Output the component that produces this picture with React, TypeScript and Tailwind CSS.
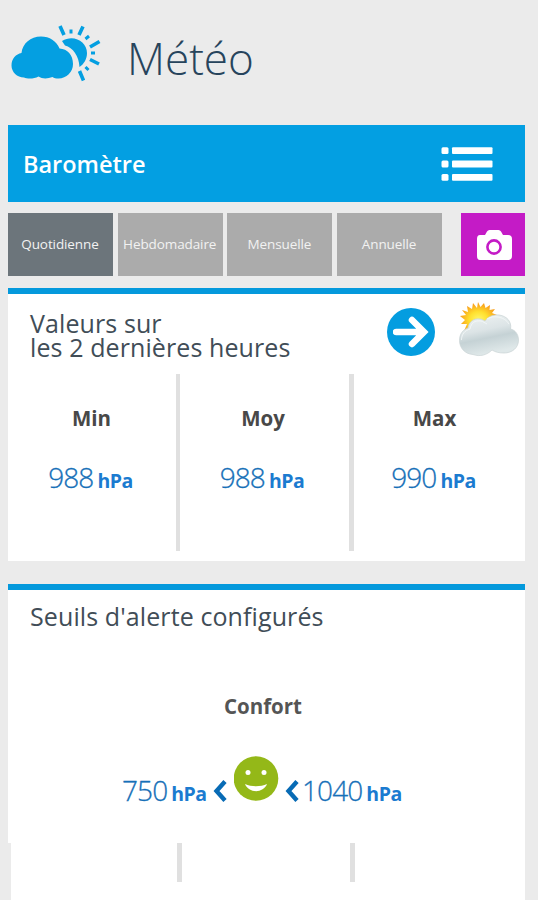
const periods = ['Quotidienne', 'Hebdomadaire', 'Mensuelle', 'Annuelle'];

const stats = [
    { label: 'Min', value: '988', column: 'w-[172px] border-r-4 pr-px' },
    { label: 'Moy', value: '988', column: 'w-[174px] border-r-5 pr-[3px]' },
    { label: 'Max', value: '990', column: 'w-[163px] pr-[2px]' },
];

function WeatherLogo() {
    return (
        <svg className="w-[92px] h-[60px] shrink-0" viewBox="0 0 92 60" fill="none">
            <path
                fill="#049fe1"
                d="M13 52.500C6 52.500 .5 47 .5 40.500C.5 33.500 5 29 10.500 28C11.500 18.500 19.500 11.500 30 11.500C38.500 11.500 45.500 16 48.500 23.500C56.500 24 62 30 62 39C62 47 55.500 53.500 47.500 53.500C45 53.500 43 53 41.500 52C36.500 54 31 54 27.500 51.500C23 54 16.500 54 13 52.500Z"
            />
            <path fill="#049fe1" d="M51 16C63 9 76 17 76 28C76 34 73 39 68.500 42C68 31 62 22.500 54 20.500Z" />
            <g stroke="#049fe1" strokeWidth="3.6">
                <path d="M49 1L53 10M72 1.500L68 10M88.500 16.500L79 22M88 39L79 34.500M68.500 46L72.500 55.500" />
                <path d="M60 4.500V8.500M78 11L74.500 14M84 28H80M77.500 45L74.500 42" strokeWidth="3" />
            </g>
        </svg>
    );
}

function PartlyCloudy() {
    return (
        <svg className="w-[62px] h-[56px] shrink-0" viewBox="0 0 62 56">
            <defs>
                <radialGradient id="sun" cx="50%" cy="55%" r="50%">
                    <stop offset="0" stopColor="#fff76a" />
                    <stop offset="0.500" stopColor="#ffe02e" />
                    <stop offset="1" stopColor="#f9a01c" />
                </radialGradient>
                <linearGradient id="cloud" x1="0" y1="0" x2="0.300" y2="1">
                    <stop offset="0" stopColor="#f0f4f4" />
                    <stop offset="0.450" stopColor="#dce4e6" />
                    <stop offset="0.650" stopColor="#c5d2d5" />
                    <stop offset="1" stopColor="#dfe8e9" />
                </linearGradient>
            </defs>
            <path
                fill="url(#sun)"
                d="M20 0L22.500 5L26 1L27.500 6L32 3L31.500 8L37 7L34 11L39 13L35 16L39 20L34 20L36 26L31 24L30 30L26 26L22 32L19 27L14 31L13 26L6 29L9 22L3 22L7 18L2 14L8 13L4 8L10 10L9 4L14 7L15 1L19 6Z"
            />
            <path
                fill="url(#cloud)"
                stroke="#c9d2d4"
                strokeWidth="0.700"
                d="M15 52.500C7 52 1.500 46 1.500 38.500C1.500 32 5 27.500 10 26C11 19.500 16 16 22 17C24 17 25 18 27 19C30 14 36 12.500 41 13C49 14 54 20 52.500 27C57 28 60.500 32 60.500 38C60.500 46 54 51 46 51C41 51 37 50 34 48C29 53 22 55 15 52.500Z"
            />
            <path
                fill="none"
                stroke="#f5f9f9"
                strokeWidth="1"
                opacity="0.800"
                d="M3.500 38C3.500 32 7 28.500 12 27C13 21 17 18 23 19C25 19.500 27 21 29 22M29 17C36 12.500 47 15 51 22"
            />
        </svg>
    );
}

function Chevron() {
    return (
        <svg className="w-[14px] h-[22px]" viewBox="0 0 14 22" fill="none">
            <path d="M12 1.500L3.500 11L12 20.500" stroke="#086bb5" strokeWidth="4.400" />
        </svg>
    );
}

function Measure({ value }: { value: string }) {
    return (
        <div className="flex items-baseline gap-[4px] leading-[28px] whitespace-nowrap">
            <span className="text-[28px] font-light tracking-[-0.900px] text-[#1670b8] [-webkit-text-stroke:0.300px_#1670b8]">{value}</span>
            <span className="text-[19.500px] font-bold tracking-[-0.500px] text-[#1b7bd0]">hPa</span>
        </div>
    );
}

export default function App() {
    return (
        <div className="w-[538px] h-[900px] overflow-hidden bg-[#ebebeb] pl-[8px] pr-[13px] font-['Open_Sans',sans-serif]">
            <header className="flex h-[125px] pt-[25px] pl-[3px]">
                <WeatherLogo />
                <h1 className="ml-[24px] mt-[3px] text-[44px] leading-[60px] font-light text-[#27445c]">Météo</h1>
            </header>

            <div className="flex items-center justify-between h-[77px] bg-[#039fe2] pl-[15px] pr-[32px]">
                <h2 className="text-[23.500px] leading-[32px] font-semibold text-white">Baromètre</h2>
                <svg className="w-[52px] h-[34px]" viewBox="0 0 52 34" fill="white">
                    <rect x="0.500" y="0.300" width="7" height="6.800" rx="1.500" />
                    <rect x="0.500" y="13.600" width="7" height="6.800" rx="1.500" />
                    <rect x="0.500" y="26.900" width="7" height="6.800" rx="1.500" />
                    <rect x="11" y="0.300" width="40.500" height="6.800" rx="1" />
                    <rect x="11" y="13.600" width="40.500" height="6.800" rx="1" />
                    <rect x="11" y="26.900" width="40.500" height="6.800" rx="1" />
                </svg>
            </div>

            <div className="flex justify-between mt-[11px] h-[63px]">
                <div className="flex gap-[4.700px]">
                    {periods.map((period, i) => (
                        <button
                            key={period}
                            className={`w-[105px] h-full pr-px text-[13.500px] tracking-[-0.100px] text-center whitespace-nowrap text-[#f2f2f2] ${i === 0 ? 'bg-[#6c757b]' : 'bg-[#ababab]'}`}
                        >
                            {period}
                        </button>
                    ))}
                </div>
                <button className="flex items-center justify-center w-[64px] h-full pl-px bg-[#c41bc6]">
                    <svg className="w-[36px] h-[32px]" viewBox="0 0 36 32">
                        <path
                            fill="white"
                            d="M4 6H9L11 2.500Q11.800 1 13.500 1H22.500Q24.200 1 25 2.500L27 6H32Q36 6 36 10V27Q36 31 32 31H4Q1 31 1 27V10Q1 6 4 6Z"
                        />
                        <circle cx="18" cy="18" r="6.600" fill="white" stroke="#c41bc6" strokeWidth="2.600" />
                    </svg>
                </button>
            </div>

            {/* Last two hours */}
            <section className="mt-[12px] h-[273px] bg-white border-t-6 border-[#0499dc]">
                <div className="flex h-[80px] pl-[22px] pr-[5px]">
                    <h3 className="flex-1 mt-[17px] text-[25px] leading-[24px] tracking-[0.100px] whitespace-nowrap text-[#414d57]">
                        Valeurs sur
                        <br />
                        les 2 dernières heures
                    </h3>
                    <div className="flex items-center justify-center mt-[14px] mr-px size-[48px] rounded-full bg-[#049de0]">
                        <svg className="size-[36px]" viewBox="0 0 36 36" fill="none" stroke="white" strokeWidth="6.500" strokeLinecap="round">
                            <path d="M3 18H30M19 6L31 18L19 30" />
                        </svg>
                    </div>
                    <div className="ml-[22px] mt-[8px]">
                        <PartlyCloudy />
                    </div>
                </div>
                <div className="flex h-[177px]">
                    {stats.map((stat) => (
                        <div key={stat.label} className={`flex flex-col items-center shrink-0 pt-[30px] border-[#e0e0e0] ${stat.column}`}>
                            <span className="text-[20.500px] leading-[28px] font-bold text-[#484848]">{stat.label}</span>
                            <div className="mt-[31px] pr-[2px]">
                                <Measure value={stat.value} />
                            </div>
                        </div>
                    ))}
                </div>
            </section>

            {/* Alert thresholds */}
            <section className="mt-[23px] h-[259px] bg-white border-t-6 border-[#0499dc]">
                <h3 className="pt-[10px] pl-[22px] text-[25px] leading-[32px] tracking-[0.100px] text-[#414d57]">Seuils d'alerte configurés</h3>
                <p className="mt-[60px] pr-[7px] text-center text-[20.500px] leading-[28px] font-bold text-[#555555]">Confort</p>
                <div className="flex items-start mt-[36px] ml-[114px]">
                    <div className="flex mt-[20px] w-[112px]">
                        <Measure value="750" />
                        <div className="ml-[6px] mt-[4px]">
                            <Chevron />
                        </div>
                    </div>
                    <svg className="size-[45px]" viewBox="0 0 45 45">
                        <circle cx="22" cy="22.500" r="22.300" fill="#94b818" />
                        <circle cx="14" cy="16.500" r="2.500" fill="white" />
                        <circle cx="30" cy="16.500" r="2.500" fill="white" />
                        <path d="M11 28C17.500 31 26.500 31 33 28C29.500 37.500 14.500 37.500 11 28Z" fill="white" />
                    </svg>
                    <div className="flex mt-[20px] ml-[6px]">
                        <div className="mt-[4px] mr-[3px]">
                            <Chevron />
                        </div>
                        <Measure value="1040" />
                    </div>
                </div>
            </section>
            <div className="flex ml-[3px] h-[57px] bg-white pl-[166px] gap-[168px]">
                <div className="w-[5px] h-[39px] bg-[#e0e0e0]" />
                <div className="w-[5px] h-[39px] bg-[#e0e0e0]" />
            </div>
        </div>
    );
}
